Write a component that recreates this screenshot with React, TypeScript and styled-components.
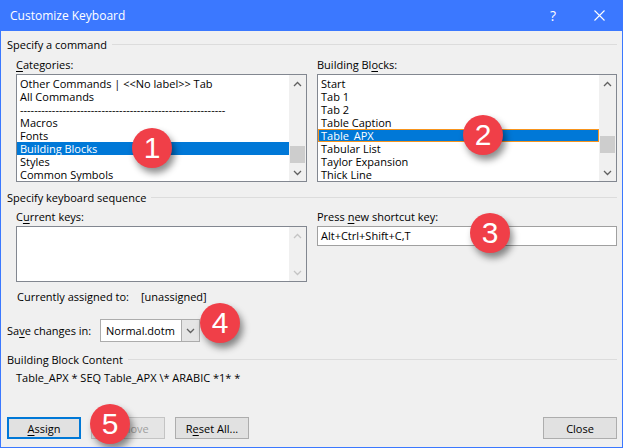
import React from 'react';
import styled, { createGlobalStyle, css } from 'styled-components';

const Global = createGlobalStyle`
  html, body { margin: 0; padding: 0; background: #f0f0f0; }
  body {
    font-family: "Open Sans", "Noto Sans", sans-serif;
    font-size: 11px;
    color: #000;
  }
`;

const Window = styled.div`
  position: relative;
  width: 623px;
  height: 448px;
  box-sizing: border-box;
  border: 1px solid #3b78ff;
  border-top: none;
  background: #f0f0f0;
  display: flex;
  flex-direction: column;
  overflow: hidden;
`;

const TitleBar = styled.div`
  height: 31px;
  flex: none;
  background: #3b78ff;
  display: flex;
  align-items: center;
  padding-left: 9px;
  color: #fff;
  font-size: 12px;
`;

const TitleText = styled.div`
  flex: 1;
`;

const CaptionButton = styled.div`
  width: 46px;
  height: 31px;
  display: flex;
  align-items: center;
  justify-content: center;
  color: #fff;
  font-size: 14px;
`;

const Body = styled.div`
  flex: 1;
  display: flex;
  flex-direction: column;
  padding: 0 5px 8px 6px;
`;

const GroupHeader = styled.div<{ $top: number }>`
  display: flex;
  align-items: center;
  height: 16px;
  margin-top: ${(p) => p.$top}px;
  white-space: nowrap;
  &::after {
    content: '';
    flex: 1;
    height: 1px;
    background: #dcdcdc;
    margin-left: 5px;
  }
`;

const Columns = styled.div<{ $top: number }>`
  display: grid;
  grid-template-columns: 291px 300px;
  column-gap: 10px;
  margin: ${(p) => p.$top}px 0 0 9px;
`;

const Field = styled.div`
  display: flex;
  flex-direction: column;
`;

const Label = styled.div`
  height: 14px;
  line-height: 14px;
  margin-bottom: 2px;
  white-space: nowrap;
`;

const U = styled.span`
  text-decoration: underline;
  text-underline-offset: 2px;
`;

const ListBox = styled.div<{ $height: number }>`
  display: flex;
  height: ${(p) => p.$height}px;
  box-sizing: border-box;
  border: 1px solid #828790;
  background: #fff;
`;

const ListItems = styled.div`
  flex: 1;
  min-width: 0;
  padding-top: 2px;
  overflow: hidden;
`;

const ListItem = styled.div<{ $selected?: boolean; $focused?: boolean }>`
  height: 13px;
  line-height: 13px;
  padding-left: 3px;
  white-space: nowrap;
  box-sizing: border-box;
  ${(p) =>
    p.$selected &&
    css`
      background: #0078d7;
      color: #fff;
    `}
  ${(p) =>
    p.$focused &&
    css`
      outline: 1px solid #f7941d;
      outline-offset: -1px;
    `}
`;

const ScrollBar = styled.div`
  width: 17px;
  flex: none;
  background: #f0f0f0;
  display: flex;
  flex-direction: column;
`;

const ScrollArrow = styled.div`
  height: 17px;
  flex: none;
  display: flex;
  align-items: center;
  justify-content: center;
`;

const ScrollTrack = styled.div`
  flex: 1;
  display: flex;
  flex-direction: column;
`;

const Thumb = styled.div<{ $offset: number }>`
  margin: ${(p) => p.$offset}px 1px 0 1px;
  height: 17px;
  background: #cdcdcd;
`;

const TextInput = styled.div`
  height: 20px;
  box-sizing: border-box;
  border: 1px solid #a0a0a0;
  background: #fff;
  padding-left: 3px;
  line-height: 18px;
  white-space: nowrap;
`;

const Line = styled.div<{ $top: number; $indent?: number }>`
  height: 14px;
  line-height: 14px;
  margin: ${(p) => p.$top}px 0 0 ${(p) => p.$indent ?? 0}px;
  display: flex;
  white-space: nowrap;
`;

const AssignedValue = styled.span`
  margin-left: 12px;
`;

const SaveRow = styled.div`
  display: flex;
  align-items: center;
  height: 23px;
  margin-top: 15px;
`;

const SaveLabel = styled.div`
  width: 93px;
  white-space: nowrap;
`;

const Combo = styled.div`
  display: flex;
  width: 100px;
  height: 23px;
  box-sizing: border-box;
  border: 1px solid #acacac;
  background: #fff;
`;

const ComboText = styled.div`
  flex: 1;
  padding-left: 5px;
  line-height: 21px;
`;

const ComboButton = styled.div`
  width: 17px;
  background: #e5e5e5;
  border-left: 1px solid #acacac;
  display: flex;
  align-items: center;
  justify-content: center;
`;

const ButtonRow = styled.div`
  margin-top: auto;
  display: flex;
  align-items: center;
`;

const Button = styled.div<{ $default?: boolean; $disabled?: boolean; $gap?: number }>`
  width: 74px;
  height: 22px;
  box-sizing: border-box;
  margin-left: ${(p) => p.$gap ?? 0}px;
  background: #e1e1e1;
  border: 1px solid #adadad;
  display: flex;
  align-items: center;
  justify-content: center;
  white-space: nowrap;
  ${(p) =>
    p.$default &&
    css`
      border: 2px solid #0078d7;
    `}
  ${(p) =>
    p.$disabled &&
    css`
      background: #e5e5e5;
      border-color: #c4c4c4;
      color: #a0a0a0;
    `}
`;

const Spacer = styled.div`
  flex: 1;
`;

const Badge = styled.div<{ $x: number; $y: number }>`
  position: absolute;
  left: ${(p) => p.$x - 20}px;
  top: ${(p) => p.$y - 20}px;
  width: 40px;
  height: 40px;
  border-radius: 50%;
  background: #f03f48;
  color: #fff;
  font-family: "Liberation Sans", Arial, sans-serif;
  font-size: 30px;
  line-height: 40px;
  text-align: center;
  box-shadow: 3px 5px 7px rgba(0, 0, 0, 0.45);
`;

const Chevron = ({ up, color = '#606060' }: { up?: boolean; color?: string }) => (
  <svg width="9" height="6" viewBox="0 0 9 6">
    <polyline
      points={up ? '1,5 4.5,1.5 8,5' : '1,1 4.5,4.5 8,1'}
      fill="none"
      stroke={color}
      strokeWidth="1.3"
    />
  </svg>
);

const Scroll = ({ thumb, disabled }: { thumb?: number; disabled?: boolean }) => {
  const c = disabled ? '#c4c4c4' : '#606060';
  return (
    <ScrollBar>
      <ScrollArrow>
        <Chevron up color={c} />
      </ScrollArrow>
      <ScrollTrack>{thumb !== undefined && <Thumb $offset={thumb} />}</ScrollTrack>
      <ScrollArrow>
        <Chevron color={c} />
      </ScrollArrow>
    </ScrollBar>
  );
};

const categories = [
  'Other Commands | <<No label>> Tab',
  'All Commands',
  '-'.repeat(58),
  'Macros',
  'Fonts',
  'Building Blocks',
  'Styles',
  'Common Symbols',
];

const blocks = [
  'Start',
  'Tab 1',
  'Tab 2',
  'Table Caption',
  'Table_APX',
  'Tabular List',
  'Taylor Expansion',
  'Thick Line',
];

export default function App() {
  return (
    <>
      <Global />
      <Window>
        <TitleBar>
          <TitleText>Customize Keyboard</TitleText>
          <CaptionButton>?</CaptionButton>
          <CaptionButton>
            <svg width="11" height="11" viewBox="0 0 11 11">
              <path d="M0.5 0.5 L10.5 10.5 M10.5 0.5 L0.5 10.5" stroke="#fff" strokeWidth="1.1" />
            </svg>
          </CaptionButton>
        </TitleBar>
        <Body>
          <GroupHeader $top={5}>Specify a command</GroupHeader>
          <Columns $top={6}>
            <Field>
              <Label>
                <U>C</U>ategories:
              </Label>
              <ListBox $height={108}>
                <ListItems>
                  {categories.map((c) => (
                    <ListItem key={c} $selected={c === 'Building Blocks'}>
                      {c}
                    </ListItem>
                  ))}
                </ListItems>
                <Scroll thumb={54} />
              </ListBox>
            </Field>
            <Field>
              <Label>
                Building Bl<U>o</U>cks:
              </Label>
              <ListBox $height={108}>
                <ListItems>
                  {blocks.map((b) => (
                    <ListItem key={b} $selected={b === 'Table_APX'} $focused={b === 'Table_APX'}>
                      {b}
                    </ListItem>
                  ))}
                </ListItems>
                <Scroll thumb={44} />
              </ListBox>
            </Field>
          </Columns>
          <GroupHeader $top={7}>Specify keyboard sequence</GroupHeader>
          <Columns $top={5}>
            <Field>
              <Label>
                C<U>u</U>rrent keys:
              </Label>
              <ListBox $height={56}>
                <ListItems />
                <Scroll disabled />
              </ListBox>
            </Field>
            <Field>
              <Label>
                Press <U>n</U>ew shortcut key:
              </Label>
              <TextInput>Alt+Ctrl+Shift+C,T</TextInput>
            </Field>
          </Columns>
          <Line $top={8} $indent={10}>
            Currently assigned to:<AssignedValue>[unassigned]</AssignedValue>
          </Line>
          <SaveRow>
            <SaveLabel>
              Sa<U>v</U>e changes in:
            </SaveLabel>
            <Combo>
              <ComboText>Normal.dotm</ComboText>
              <ComboButton>
                <Chevron />
              </ComboButton>
            </Combo>
          </SaveRow>
          <GroupHeader $top={9}>Building Block Content</GroupHeader>
          <Line $top={4} $indent={9}>
            Table_APX * SEQ Table_APX \* ARABIC *1* *
          </Line>
          <ButtonRow>
            <Button $default>
              <U>A</U>ssign
            </Button>
            <Button $disabled $gap={10}>
              <U>R</U>emove
            </Button>
            <Button $gap={10}>
              R<U>e</U>set All...
            </Button>
            <Spacer />
            <Button>Close</Button>
          </ButtonRow>
        </Body>
        <Badge $x={151} $y={148}>1</Badge>
        <Badge $x={482} $y={135}>2</Badge>
        <Badge $x={489} $y={233}>3</Badge>
        <Badge $x={219} $y={323}>4</Badge>
        <Badge $x={109} $y={424}>5</Badge>
      </Window>
    </>
  );
}
